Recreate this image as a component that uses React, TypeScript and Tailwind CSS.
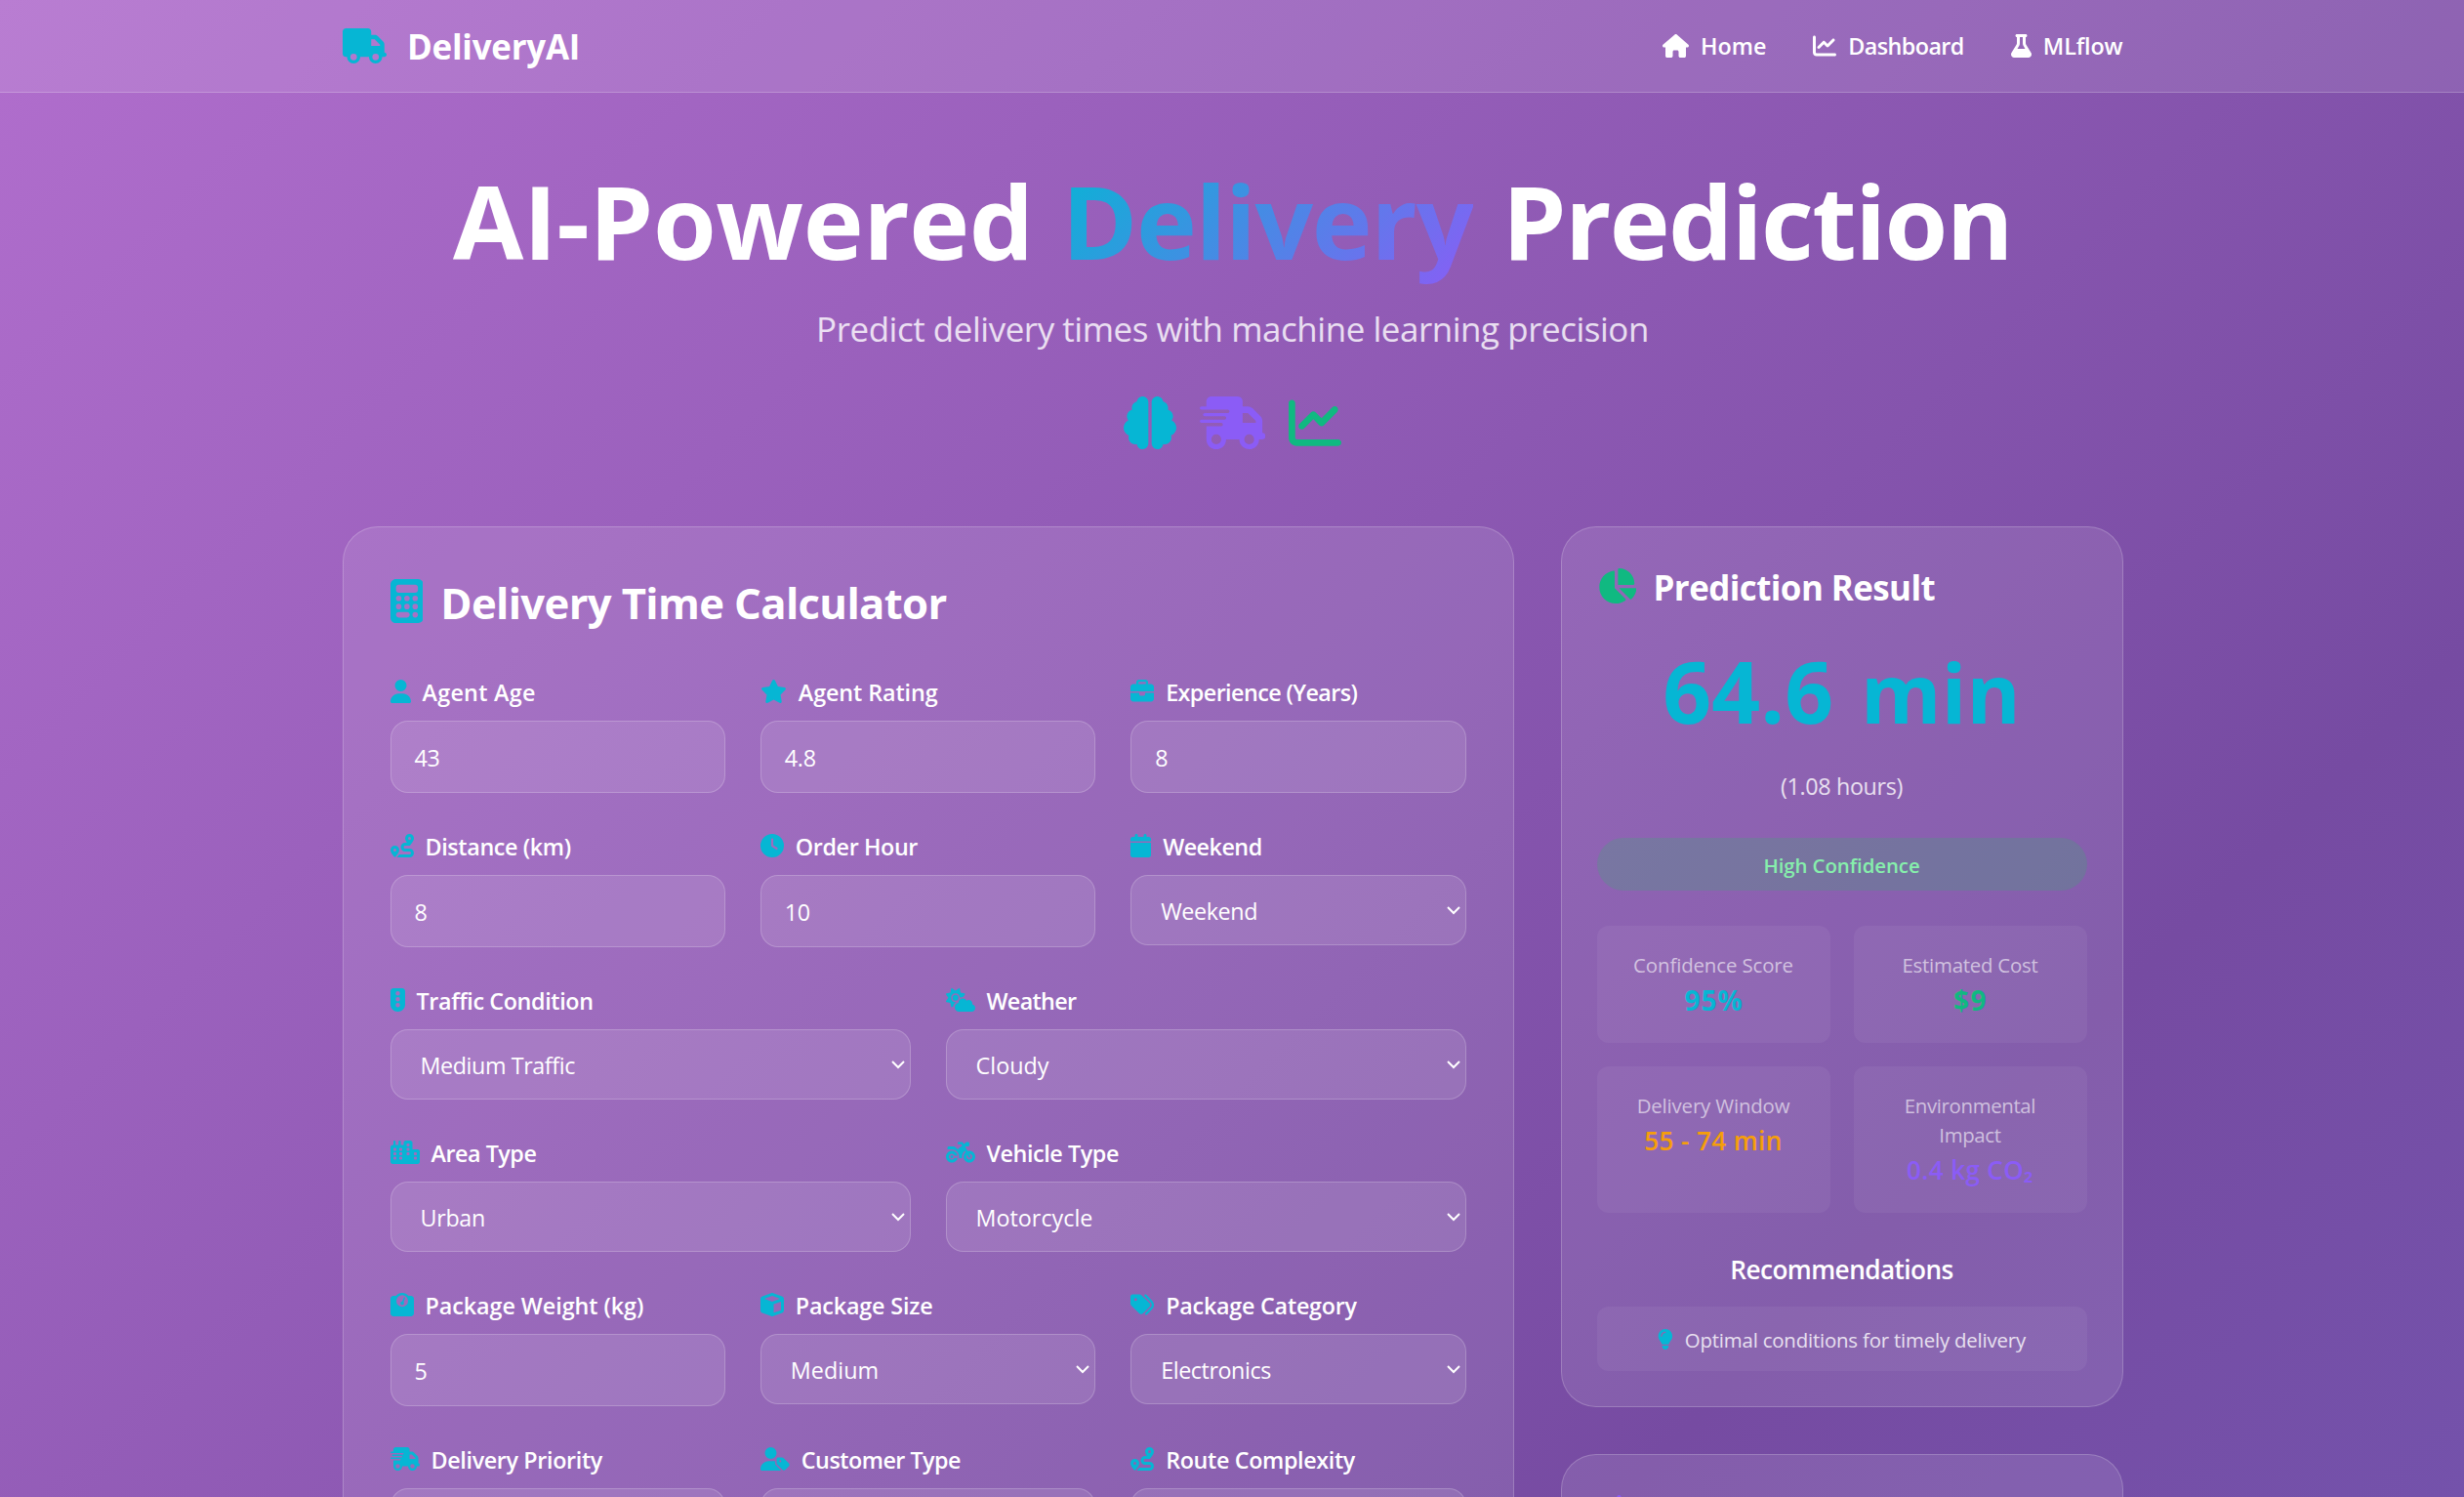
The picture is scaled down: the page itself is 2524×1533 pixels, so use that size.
import React from 'react'
import {
  FaTruck, FaHouse, FaChartLine, FaFlask, FaBrain, FaTruckFast, FaCalculator, FaUser, FaStar, FaBriefcase,
  FaRoute, FaClock, FaCalendar, FaTrafficLight, FaCloudSun, FaCity, FaMotorcycle, FaWeightScale, FaCube,
  FaTags, FaUserTag, FaChartPie, FaLightbulb, FaRobot,
} from 'react-icons/fa6'
import type { IconType } from 'react-icons'

type FieldProps = {
  icon: IconType
  iconWidth: string
  label: string
  tracking?: string
  value?: string
  valueTracking?: string
  select?: boolean
}

function Field({ icon: Icon, iconWidth, label, tracking = '', value = '', valueTracking = '', select = false }: FieldProps) {
  return (
    <div>
      <div className="mb-3 flex h-9 items-center gap-3">
        <Icon className={`h-6 shrink-0 text-[#06b6d4] ${iconWidth}`} />
        <span className={`whitespace-nowrap pt-0.5 text-[23.3px] leading-9 font-semibold text-white ${tracking}`}>{label}</span>
      </div>
      {select ? (
        <div className="flex h-[72px] items-center justify-between rounded-[18px] border border-white/20 bg-white/10 pr-[5px] pl-[30px]">
          <span className={`pt-0.5 text-[23.3px] leading-9 text-white ${valueTracking}`}>{value}</span>
          <svg className="h-[9px] w-[14px]" viewBox="0 0 14 9" fill="none" stroke="white" strokeWidth="2">
            <path d="M1 1l6 6 6-6" />
          </svg>
        </div>
      ) : (
        <div className="flex h-[74px] items-center rounded-[18px] border border-white/20 bg-white/10 pl-6">
          <span className="pt-0.5 text-[23.3px] leading-9 tracking-[-0.32px] text-white">{value}</span>
        </div>
      )}
    </div>
  )
}

type StatProps = { label: string; value: string; color: string; height: string; tracking?: string; valueTracking?: string }

function Stat({ label, value, color, height, tracking = '', valueTracking = '' }: StatProps) {
  return (
    <div className={`rounded-xl bg-white/5 px-6 pt-[25px] text-center ${height}`}>
      <div className={`text-[20.4px] leading-[30px] text-white/60 ${tracking}`}>{label}</div>
      <div className={`leading-[42px] ${color} ${valueTracking}`}>{value}</div>
    </div>
  )
}

export default function App() {
  return (
    <div className="h-[1533px] overflow-hidden bg-[linear-gradient(135deg,#b16ecd_0%,#764ba2_78.6%,#7452ab_100%)] font-['Open_Sans','Noto_Sans',sans-serif]">
      <header className="h-[95px] border-b border-white/20 bg-white/10 pl-px">
        <div className="mx-auto flex h-[94px] w-[1824px] items-center justify-between">
          <div className="flex items-center gap-[21.5px]">
            <FaTruck className="h-9 w-[45px] text-[#06b6d4]" />
            <span className="pt-0.5 text-[34.9px] leading-[48px] font-bold tracking-[-0.25px] text-white">DeliveryAI</span>
          </div>
          <nav className="flex items-center gap-12 text-[23.3px] font-semibold text-white">
            <span className="flex items-center gap-3">
              <FaHouse className="h-6 w-[27px]" />
              <span className="tracking-[-0.06px]">Home</span>
            </span>
            <span className="flex items-center gap-3">
              <FaChartLine className="h-6 w-6" />
              <span className="tracking-[-0.55px]">Dashboard</span>
            </span>
            <span className="flex items-center gap-3">
              <FaFlask className="h-6 w-[21px]" />
              <span className="tracking-[-0.1px]">MLflow</span>
            </span>
          </nav>
        </div>
      </header>

      <main className="pl-px">
        <div className="mx-auto w-[1824px]">
          <section className="h-[444px] pt-[77px] text-center">
            <h1 className="flex h-[108px] items-start justify-center text-[104.8px] leading-[108px] font-bold text-white">
              <span className="tracking-[-0.41px]">AI-Powered</span>
              <span className="-mt-5 mr-[30px] -mb-4 ml-[29px] bg-[linear-gradient(135deg,#06b6d4,#8b5cf6)] bg-clip-text pt-5 pb-4 tracking-[-1.4px] text-transparent">
                Delivery
              </span>
              <span className="tracking-[-1.65px]">Prediction</span>
            </h1>
            <p className="mt-[33px] text-[34.9px] leading-[48px] tracking-[-0.43px] text-white/80">
              Predict delivery times with machine learning precision
            </p>
            <div className="mt-[45px] flex justify-center gap-6">
              <FaBrain className="h-[54px] w-[54px] text-[#06b6d4]" />
              <FaTruckFast className="h-[54px] w-[67.5px] text-[#8b5cf6]" />
              <FaChartLine className="h-[54px] w-[54px] text-[#10b981]" />
            </div>
          </section>

          <div className="flex items-start gap-12">
            <section className="h-[1200px] w-[1200px] rounded-[36px] border border-white/20 bg-white/10 p-12">
              <h2 className="mb-12 flex h-[54px] items-center gap-[18px] text-[43.65px] leading-[54px] font-bold text-white">
                <FaCalculator className="h-[45px] w-[33.75px] text-[#06b6d4]" />
                <span className="pt-[3px] tracking-[-0.65px]">Delivery Time Calculator</span>
              </h2>
              <div className="flex flex-col gap-9">
                <div className="grid grid-cols-3 gap-9">
                  <Field icon={FaUser} iconWidth="w-[21px]" label="Agent Age" tracking="tracking-[0.29px]" value="43" />
                  <Field icon={FaStar} iconWidth="w-[27px]" label="Agent Rating" tracking="tracking-[-0.08px]" value="4.8" />
                  <Field icon={FaBriefcase} iconWidth="w-6" label="Experience (Years)" tracking="tracking-[-0.57px]" value="8" />
                </div>
                <div className="grid grid-cols-3 gap-9">
                  <Field icon={FaRoute} iconWidth="w-6" label="Distance (km)" tracking="tracking-[-0.35px]" value="8" />
                  <Field icon={FaClock} iconWidth="w-6" label="Order Hour" tracking="tracking-[-0.38px]" value="10" />
                  <Field icon={FaCalendar} iconWidth="w-[21px]" label="Weekend" tracking="tracking-[-0.49px]" value="Weekend" valueTracking="tracking-[-0.38px]" select />
                </div>
                <div className="grid grid-cols-2 gap-9">
                  <Field icon={FaTrafficLight} iconWidth="w-[15px]" label="Traffic Condition" tracking="tracking-[-0.36px]" value="Medium Traffic" valueTracking="tracking-[-0.4px]" select />
                  <Field icon={FaCloudSun} iconWidth="w-[30px]" label="Weather" tracking="tracking-[-0.65px]" value="Cloudy" valueTracking="tracking-[0.04px]" select />
                </div>
                <div className="grid grid-cols-2 gap-9">
                  <Field icon={FaCity} iconWidth="w-[30px]" label="Area Type" tracking="tracking-[-0.46px]" value="Urban" valueTracking="tracking-[-0.3px]" select />
                  <Field icon={FaMotorcycle} iconWidth="w-[30px]" label="Vehicle Type" tracking="tracking-[-0.41px]" value="Motorcycle" valueTracking="tracking-[0.02px]" select />
                </div>
                <div className="grid grid-cols-3 gap-9">
                  <Field icon={FaWeightScale} iconWidth="w-6" label="Package Weight (kg)" tracking="tracking-[-0.04px]" value="5" />
                  <Field icon={FaCube} iconWidth="w-6" label="Package Size" tracking="tracking-[-0.15px]" value="Medium" valueTracking="tracking-[0.05px]" select />
                  <Field icon={FaTags} iconWidth="w-6" label="Package Category" tracking="tracking-[-0.22px]" value="Electronics" valueTracking="tracking-[-0.42px]" select />
                </div>
                <div className="grid grid-cols-3 gap-9">
                  <Field icon={FaTruckFast} iconWidth="w-[30px]" label="Delivery Priority" tracking="tracking-[-0.34px]" select />
                  <Field icon={FaUserTag} iconWidth="w-[30px]" label="Customer Type" tracking="tracking-[-0.5px]" select />
                  <Field icon={FaRoute} iconWidth="w-6" label="Route Complexity" tracking="tracking-[-0.34px]" select />
                </div>
              </div>
            </section>

            <aside className="flex w-[576px] flex-col gap-12">
              <section className="h-[902px] rounded-[36px] border border-white/20 bg-white/10 p-9">
                <h3 className="flex h-12 items-center gap-[17.5px] text-[34.9px] leading-[48px] font-bold text-white">
                  <FaChartPie className="h-9 w-[40.5px] text-[#10b981]" />
                  <span className="pt-[3px] tracking-[-0.56px]">Prediction Result</span>
                </h3>
                <div className="mt-[39px] h-[90px] text-center text-[87.3px] leading-[90px] font-bold tracking-[0.12px] text-[#06b6d4]">
                  64.6 <span className="ml-[5px] text-[84px]">min</span>
                </div>
                <div className="mt-[34px] text-center text-[23.3px] leading-9 tracking-[-0.34px] text-white/80">(1.08 hours)</div>
                <div className="mt-[35px] flex h-[54px] items-center justify-center rounded-full bg-[rgba(34,197,94,0.2)] pt-0.5 text-[20.4px] font-semibold tracking-[-0.07px] text-[#86efac]">
                  High Confidence
                </div>
                <div className="mt-9 grid grid-cols-2 gap-6">
                  <Stat label="Confidence Score" value="95%" color="text-[28px] font-bold text-[#06b6d4]" height="h-[120px]" tracking="tracking-[-0.11px]" valueTracking="tracking-[1px] pl-px" />
                  <Stat label="Estimated Cost" value="$9" color="text-[28px] font-bold text-[#10b981]" height="h-[120px]" tracking="tracking-[-0.23px]" valueTracking="tracking-[1.5px] pl-px" />
                  <Stat label="Delivery Window" value="55 - 74 min" color="text-[26.2px] font-semibold text-[#f59e0b]" height="h-[150px]" tracking="tracking-[-0.16px]" valueTracking="tracking-[0.35px]" />
                  <Stat label="Environmental Impact" value="0.4 kg CO₂" color="text-[26.2px] font-semibold text-[#8b5cf6]" height="h-[150px]" tracking="tracking-[-0.35px]" valueTracking="tracking-[0.28px]" />
                </div>
                <h4 className="mt-[37px] mb-[17px] text-center text-[26.2px] leading-[42px] font-semibold tracking-[-0.58px] text-white">Recommendations</h4>
                <div className="flex h-[66px] items-center justify-center gap-3 rounded-xl bg-white/5 text-white/80">
                  <FaLightbulb className="h-[21px] w-[15.75px] text-[#06b6d4]" />
                  <span className="pt-0.5 text-[20.4px] leading-[30px] tracking-[-0.19px]">Optimal conditions for timely delivery</span>
                </div>
              </section>
              <section className="h-[600px] rounded-[36px] border border-white/20 bg-white/10 px-9 pt-[35px]">
                <h3 className="flex h-12 items-center">
                  <FaRobot className="h-9 w-[45px] text-[#8b5cf6]" />
                </h3>
              </section>
            </aside>
          </div>
        </div>
      </main>
    </div>
  )
}
